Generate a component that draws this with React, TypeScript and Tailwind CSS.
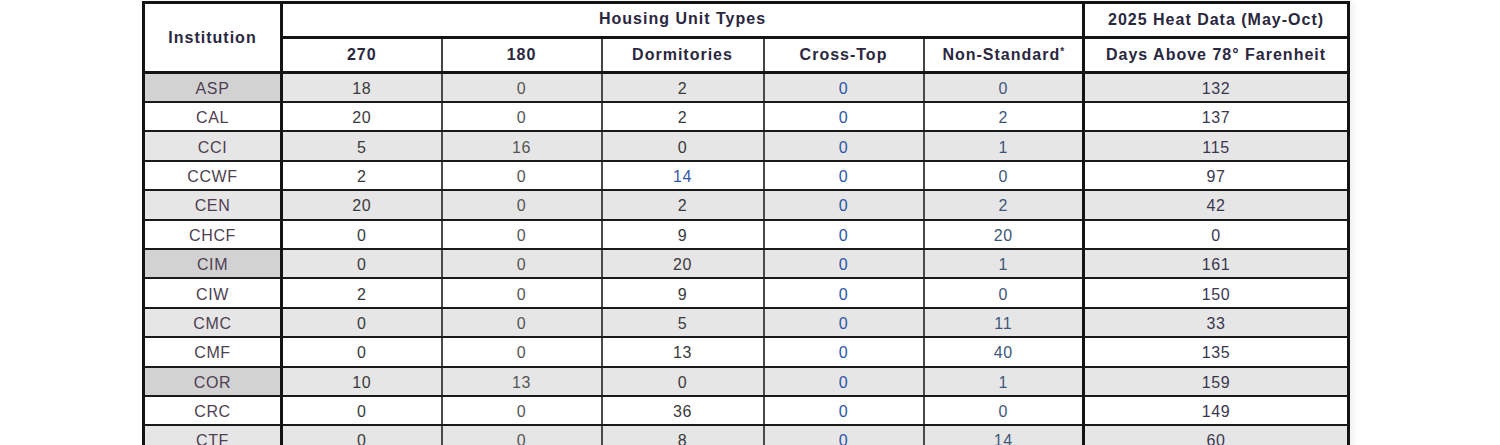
import React from "react";

type Row = {
  name: string;
  t270: number;
  t180: number;
  dorm: number;
  cross: number;
  nonStd: number;
  heat: number;
  dark?: boolean;
  dormBlue?: boolean;
};

const rows: Row[] = [
  { name: "ASP", t270: 18, t180: 0, dorm: 2, cross: 0, nonStd: 0, heat: 132, dark: true },
  { name: "CAL", t270: 20, t180: 0, dorm: 2, cross: 0, nonStd: 2, heat: 137 },
  { name: "CCI", t270: 5, t180: 16, dorm: 0, cross: 0, nonStd: 1, heat: 115 },
  { name: "CCWF", t270: 2, t180: 0, dorm: 14, cross: 0, nonStd: 0, heat: 97, dormBlue: true },
  { name: "CEN", t270: 20, t180: 0, dorm: 2, cross: 0, nonStd: 2, heat: 42 },
  { name: "CHCF", t270: 0, t180: 0, dorm: 9, cross: 0, nonStd: 20, heat: 0 },
  { name: "CIM", t270: 0, t180: 0, dorm: 20, cross: 0, nonStd: 1, heat: 161, dark: true },
  { name: "CIW", t270: 2, t180: 0, dorm: 9, cross: 0, nonStd: 0, heat: 150 },
  { name: "CMC", t270: 0, t180: 0, dorm: 5, cross: 0, nonStd: 11, heat: 33 },
  { name: "CMF", t270: 0, t180: 0, dorm: 13, cross: 0, nonStd: 40, heat: 135 },
  { name: "COR", t270: 10, t180: 13, dorm: 0, cross: 0, nonStd: 1, heat: 159, dark: true },
  { name: "CRC", t270: 0, t180: 0, dorm: 36, cross: 0, nonStd: 0, heat: 149 },
  { name: "CTF", t270: 0, t180: 0, dorm: 8, cross: 0, nonStd: 14, heat: 60 },
];

const body = "font-['Liberation_Sans',Arial,sans-serif]";
const head =
  "font-['Liberation_Sans',Arial,sans-serif] font-bold text-[16px] tracking-[1px] text-[#2a2740] p-0";

export default function App() {
  return (
    <div className="w-[1500px] h-[445px] overflow-hidden bg-white pl-[142px] pt-px">
      <table className="border-collapse table-fixed w-[1205px] shadow-[4px_0_6px_rgba(0,0,0,0.06)]">
        <colgroup>
          <col className="w-[138px]" />
          <col className="w-[160px]" />
          <col className="w-[160px]" />
          <col className="w-[162px]" />
          <col className="w-[160px]" />
          <col className="w-[160px]" />
          <col className="w-[265px]" />
        </colgroup>
        <thead>
          <tr className="h-[35px]">
            <th rowSpan={2} className={`${head} border-[3px] border-[#141414] bg-white`}>
              Institution
            </th>
            <th colSpan={5} className={`${head} border-[3px] border-[#141414] bg-white pb-0.5`}>
              Housing Unit Types
            </th>
            <th className={`${head} border-[3px] border-[#141414] bg-white`}>
              2025 Heat Data (May-Oct)
            </th>
          </tr>
          <tr className="h-[35px]">
            {["270", "180", "Dormitories", "Cross-Top"].map((h) => (
              <th
                key={h}
                className={`${head} border-x-2 border-x-[#444] border-y-[3px] border-y-[#141414] bg-white`}
              >
                {h}
              </th>
            ))}
            <th className={`${head} border-x-2 border-x-[#444] border-y-[3px] border-y-[#141414] bg-white`}>
              Non-Standard<sup className="text-[10px] tracking-normal">*</sup>
            </th>
            <th className={`${head} border-[3px] border-[#141414] bg-white`}>
              Days Above 78° Farenheit
            </th>
          </tr>
        </thead>
        <tbody className={`${body} text-[16px] tracking-[0.04em]`}>
          {rows.map((r, i) => {
            const gray = i % 2 === 0;
            const bg = gray ? "bg-[#e6e6e6]" : "bg-white";
            const cell = `${bg} border-x-2 border-x-[#4a4a4a] border-y-2 border-y-[#1a1a1a] text-center px-0 pt-[3px] pb-0`;
            return (
              <tr key={r.name} className="h-[29.4px]">
                <td
                  className={`${r.dark ? "bg-[#d2d2d2]" : bg} border-x-[3px] border-x-[#141414] border-y-2 border-y-[#1a1a1a] text-center text-[#4e3f52] px-0 pt-[3px] pb-0`}
                >
                  {r.name}
                </td>
                <td className={`${cell} text-[#3a3a3a]`}>{r.t270}</td>
                <td className={`${cell} text-[#555]`}>{r.t180}</td>
                <td className={`${cell} ${r.dormBlue ? "text-[#2f5aa6]" : "text-[#3a3a3a]"}`}>{r.dorm}</td>
                <td className={`${cell} text-[#2b55a6]`}>{r.cross}</td>
                <td className={`${cell} text-[#3e5678]`}>{r.nonStd}</td>
                <td
                  className={`${bg} border-x-[3px] border-x-[#141414] border-y-2 border-y-[#1a1a1a] text-center text-[#3b3650] px-0 pt-[3px] pb-0`}
                >
                  {r.heat}
                </td>
              </tr>
            );
          })}
        </tbody>
      </table>
    </div>
  );
}
